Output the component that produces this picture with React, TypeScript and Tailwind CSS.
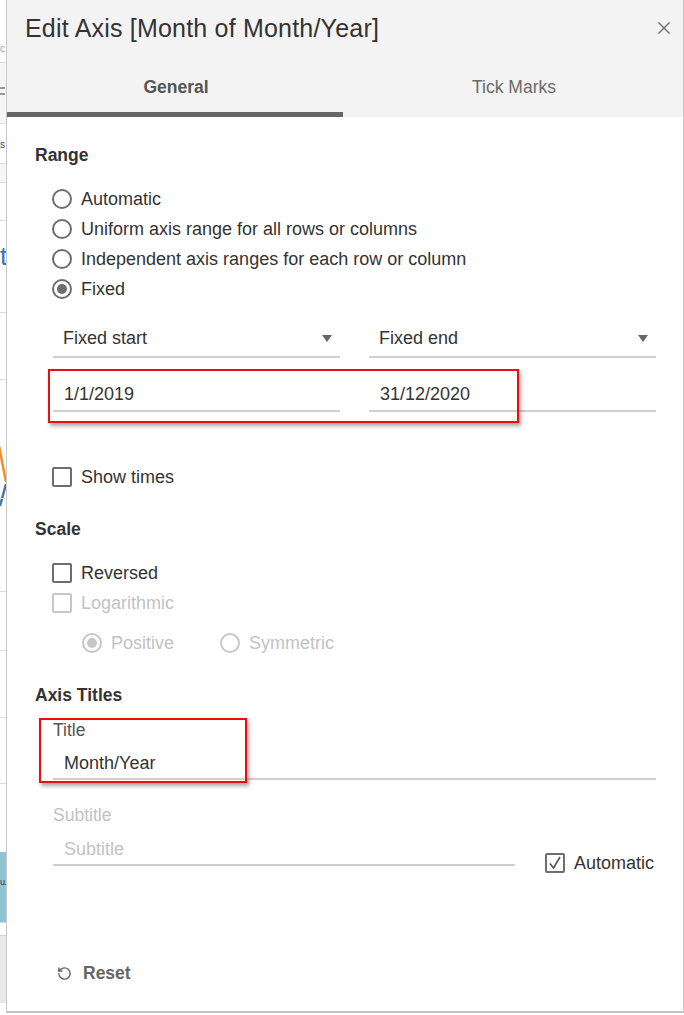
import { RotateCcw } from "lucide-react";

function Radio({ label, checked, disabled }: { label: string; checked?: boolean; disabled?: boolean }) {
  return (
    <div className="flex h-[30px] items-center gap-[9px]">
      <span
        className={`flex h-5 w-5 items-center justify-center rounded-full border-2 ${
          disabled ? "border-[#c6c6c6]" : "border-[#6e6e6e]"
        }`}
      >
        {checked && (
          <span className={`h-[10px] w-[10px] rounded-full ${disabled ? "bg-[#c6c6c6]" : "bg-[#6e6e6e]"}`} />
        )}
      </span>
      <span className={disabled ? "text-[#c2c2c2]" : "text-[#333]"}>{label}</span>
    </div>
  );
}

function Checkbox({ label, checked, disabled }: { label: string; checked?: boolean; disabled?: boolean }) {
  return (
    <div className="flex h-[30px] items-center gap-[9px]">
      <span
        className={`flex h-5 w-5 items-center justify-center rounded-[2px] border-2 ${
          disabled ? "border-[#c6c6c6]" : "border-[#6e6e6e]"
        }`}
      >
        {checked && (
          <svg width="14" height="14" viewBox="0 0 14 14">
            <polyline points="2,7.5 5.5,12 12,1" fill="none" stroke="#555" strokeWidth="1.6" />
          </svg>
        )}
      </span>
      <span className={disabled ? "text-[#c2c2c2]" : "text-[#333]"}>{label}</span>
    </div>
  );
}

function Caret() {
  return (
    <svg width="10" height="7" viewBox="0 0 10 7">
      <polygon points="0,0 10,0 5,7" fill="#666" />
    </svg>
  );
}

// sliver of the worksheet behind the dialog
function LeftStrip() {
  return (
    <div className="flex h-[1015px] w-[6px] flex-col overflow-hidden">
      <div className="h-[62px] pt-[44px] text-[10px] leading-none text-[#a0a0a0]">c</div>
      <div className="h-[61px] border-t border-[#dedede] bg-[#f6f6f6] pt-[24px]">
        <div className="h-[2px] w-[5px] bg-[#999]" />
        <div className="mt-[4px] h-[2px] w-[5px] bg-[#999]" />
      </div>
      <div className="h-[40px] border-t border-[#dedede] pt-[16px] text-[10px] leading-none text-[#444]">s</div>
      <div className="h-[19px] border-t border-[#dedede] bg-[#f6f6f6]" />
      <div className="h-[38px] border-t border-[#dedede]" />
      <div className="h-[92px] border-t border-[#dedede] pt-[22px] text-[26px] leading-none text-[#3a78b5]">t</div>
      <div className="h-[67px] border-t border-[#dedede]" />
      <div className="h-[119px] border-t border-[#dedede]">
        <svg width="6" height="130" viewBox="0 0 6 130" className="overflow-visible">
          <line x1="-1" y1="66" x2="6" y2="102" stroke="#f28e2b" strokeWidth="2.5" />
          <line x1="0" y1="126" x2="6" y2="104" stroke="#4e79a7" strokeWidth="2.5" />
        </svg>
      </div>
      <div className="h-[93px] border-t border-[#dedede]" />
      <div className="h-[59px] border-t border-[#dedede]" />
      <div className="h-[67px] border-t border-[#dedede]" />
      <div className="h-[66px] border-t border-[#dedede]" />
      <div className="h-[69px] border-t border-[#dedede]" />
      <div className="h-[70px] bg-[#8fc4d4] pt-[26px] text-[9px] leading-none tracking-[-1px] text-[#335]">u.</div>
      <div className="h-[13px] border-t border-[#d6d6d6]" />
      <div className="h-[68px] border-t border-[#d0d0d0] bg-[#e8e8e8]" />
      <div className="flex-1" />
    </div>
  );
}

export default function App() {
  return (
    <div className="flex h-[1015px] w-[684px] overflow-hidden bg-white font-['Liberation_Sans',Arial,sans-serif] text-[18px] text-[#333]">
      <LeftStrip />
      <div className="flex h-[1013px] w-[678px] flex-col border-x border-b-2 border-x-[#c9c9c9] border-b-[#c4c4c4] bg-white">
        <div className="h-[117px] bg-[#f3f3f3]">
          <div className="flex h-[62px] items-start justify-between pl-[18px] pr-[13px]">
            <h1 className="pt-[12px] text-[25px] leading-[32px] tracking-[0.2px] text-[#333]">
              Edit Axis [Month of Month/Year]
            </h1>
            <svg width="12" height="12" viewBox="0 0 12 12" className="mt-[22px]">
              <path d="M0.5 0.5 L11.5 11.5 M11.5 0.5 L0.5 11.5" stroke="#6a6a6a" strokeWidth="1.4" />
            </svg>
          </div>
          <div className="flex h-[50px] text-[17.5px]">
            <div className="flex flex-1 items-center justify-center font-bold text-[#555]">General</div>
            <div className="flex flex-1 items-center justify-center text-[#6a6a6a]">Tick Marks</div>
          </div>
          <div className="h-[5px] w-[336px] bg-[#666]" />
        </div>

        <div className="relative flex flex-1 flex-col pl-[28px] pr-[27px]">
          <div className="mt-[28px] h-5 text-[17.5px] font-bold leading-5">Range</div>
          <div className="mt-[19px] pl-[17px]">
            <Radio label="Automatic" />
            <Radio label="Uniform axis range for all rows or columns" />
            <Radio label="Independent axis ranges for each row or column" />
            <Radio label="Fixed" checked />
          </div>

          <div className="mt-[14px] flex gap-[29px] pl-[18px]">
            <div className="flex h-[40px] flex-1 items-center justify-between border-b-2 border-[#cfcfcf] pl-[10px] pr-[8px] pt-[2px]">
              <span>Fixed start</span>
              <Caret />
            </div>
            <div className="flex h-[40px] flex-1 items-center justify-between border-b-2 border-[#cfcfcf] pl-[10px] pr-[8px] pt-[2px]">
              <span>Fixed end</span>
              <Caret />
            </div>
          </div>
          <div className="mt-[14px] flex gap-[29px] pl-[18px]">
            <div className="flex h-[40px] flex-1 items-center border-b-2 border-[#cfcfcf] pl-[11px] pt-[6px]">1/1/2019</div>
            <div className="flex h-[40px] flex-1 items-center border-b-2 border-[#cfcfcf] pl-[11px] pt-[6px]">31/12/2020</div>
          </div>

          <div className="mt-[50px] pl-[17px]">
            <Checkbox label="Show times" />
          </div>

          <div className="mt-[27px] h-5 text-[17.5px] font-bold leading-5">Scale</div>
          <div className="mt-[19px] pl-[17px]">
            <Checkbox label="Reversed" />
            <Checkbox label="Logarithmic" disabled />
          </div>
          <div className="mt-[10px] flex gap-[46px] pl-[47px]">
            <Radio label="Positive" checked disabled />
            <Radio label="Symmetric" disabled />
          </div>

          <div className="mt-[27px] h-5 text-[17.5px] font-bold leading-5">Axis Titles</div>
          <div className="mt-[15px] h-5 pl-[18px] text-[17.5px] leading-5 text-[#555]">Title</div>
          <div className="ml-[18px] mt-[2px] flex h-[38px] items-center border-b-2 border-[#cfcfcf] pl-[11px] pt-[6px]">
            Month/Year
          </div>
          <div className="mt-[25px] h-5 pl-[18px] text-[17.5px] leading-5 text-[#c2c2c2]">Subtitle</div>
          <div className="ml-[18px] mt-[3px] flex items-start">
            <div className="flex h-[38px] w-[462px] items-center border-b-2 border-[#cfcfcf] pl-[11px] pt-[6px] text-[#c2c2c2]">
              Subtitle
            </div>
            <div className="ml-[30px] mt-[20px]">
              <Checkbox label="Automatic" checked />
            </div>
          </div>

          <div className="mt-[85px] flex h-5 items-center gap-[11px] pl-[22px] text-[17.5px] font-bold text-[#666]">
            <RotateCcw size={15} strokeWidth={2.3} color="#666" />
            <span>Reset</span>
          </div>

          <div className="absolute left-[41px] top-[252px] h-[54px] w-[471px] border-2 border-[#e8100f] shadow-[2px_3px_4px_rgba(0,0,0,0.35)]" />
          <div className="absolute left-[32px] top-[601px] h-[65px] w-[208px] border-2 border-[#e8100f] shadow-[2px_3px_4px_rgba(0,0,0,0.35)]" />
        </div>
      </div>
    </div>
  );
}
